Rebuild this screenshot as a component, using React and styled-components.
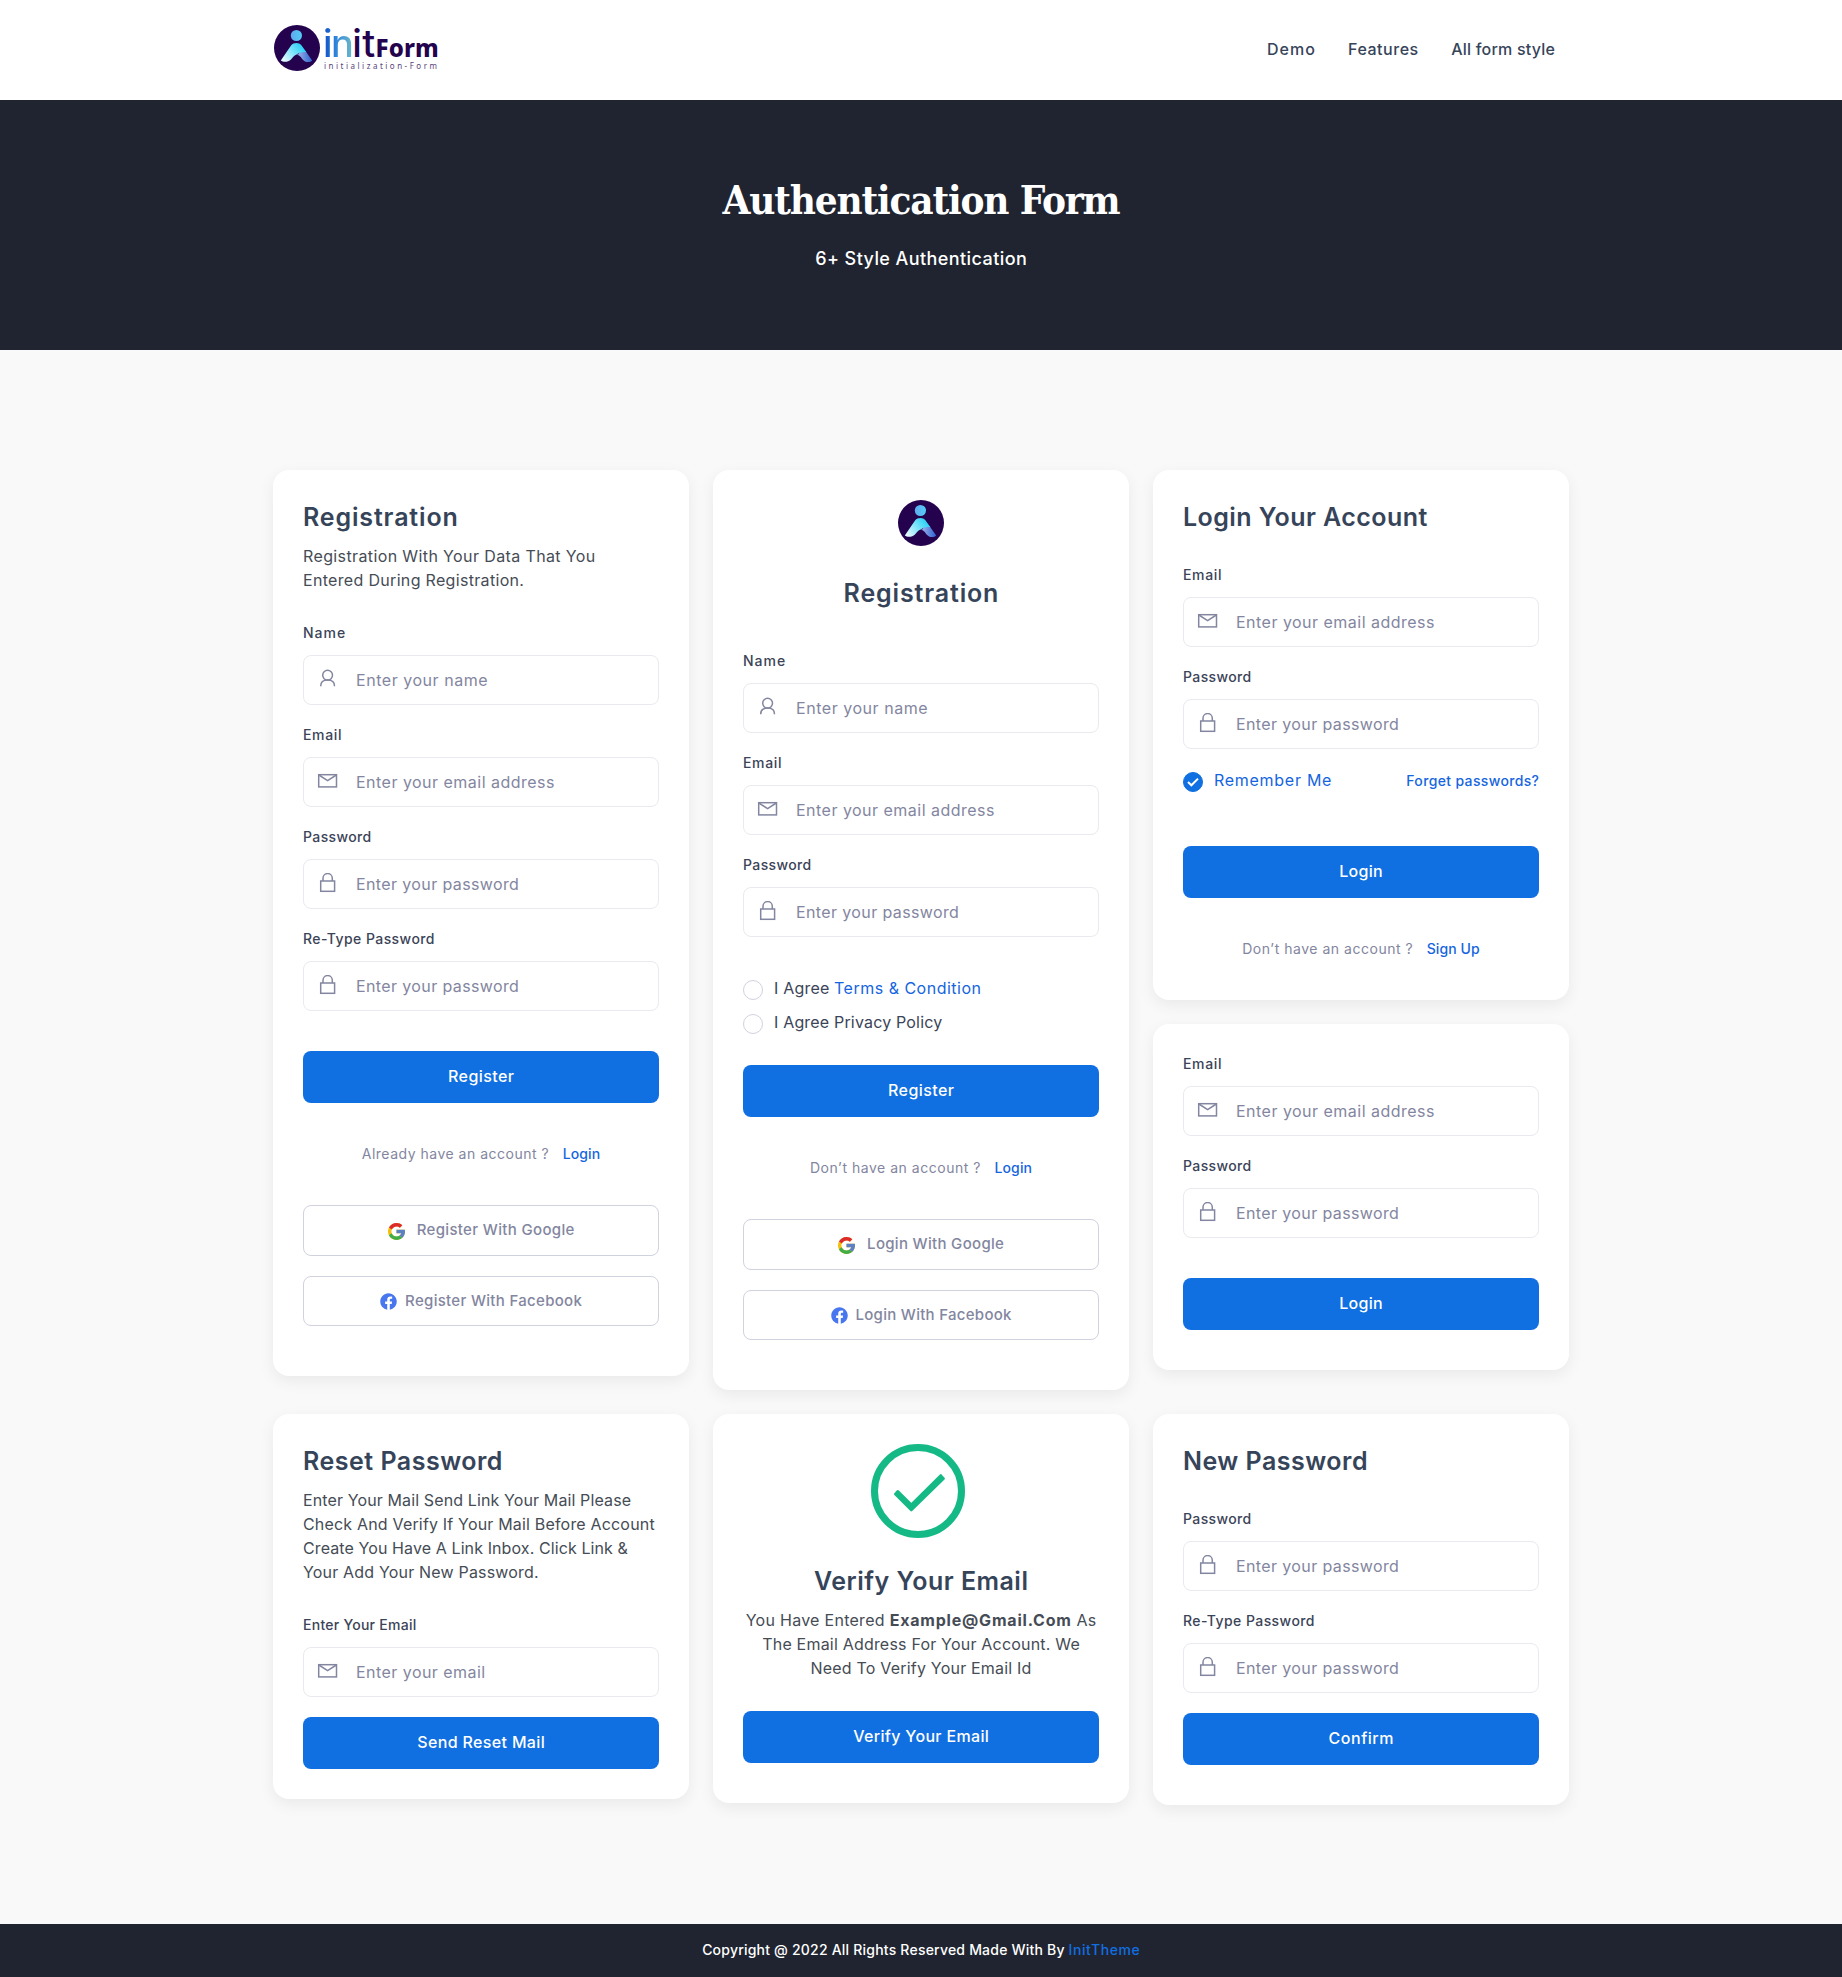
import React from "react";
import styled, { createGlobalStyle, css } from "styled-components";
import { FaFacebook } from "react-icons/fa";

const color = {
  navy: "#202430",
  blue: "#106fe1",
  link: "#1565e0",
  heading: "#36445a",
  body: "#454c55",
  label: "#3b4458",
  muted: "#8386a0",
  line: "#e9eaef",
  outline: "#d0d2de",
  green: "#15b985",
  plum: "#24024e",
};

const GlobalStyle = createGlobalStyle`
  *, *::before, *::after { box-sizing: border-box; }
  body {
    margin: 0;
    background: #f9f9f9;
    font-family: Inter, "Open Sans", sans-serif;
    font-size: 16px;
    line-height: 24px;
    color: ${color.body};
  }
  h1, h2, p { margin: 0; }
  a { text-decoration: none; color: ${color.link}; }
`;

const tracking = css`
  letter-spacing: ${(p) => p.$ls || 0}px;
  margin-right: ${(p) => -(p.$ls || 0)}px;
`;

const Track = styled.span`
  ${tracking}
`;

/* ---------- header ---------- */

const Container = styled.div`
  width: 1296px;
  margin: 0 auto;
`;

const Header = styled.header`
  height: 100px;
  background: #fff;
`;

const HeaderInner = styled(Container)`
  height: 100%;
  display: flex;
  align-items: center;
  justify-content: space-between;
  padding: 0 14px 4px 1px;
`;

const Brand = styled.a`
  display: flex;
  align-items: center;
  gap: 3px;
  color: ${color.plum};
`;

const Wordmark = styled.span`
  display: flex;
  flex-direction: column;
`;

const WordRow = styled.span`
  display: flex;
  align-items: baseline;
  height: 34px;
  line-height: 34px;
  font-size: 38px;
  font-weight: 500;
`;

const WordIn = styled.span`
  letter-spacing: -1.6px;
  color: transparent;
  background: linear-gradient(90deg, #1559c9 10%, #2f86dc 45%, #6cb8c9 100%);
  background-clip: text;
  -webkit-background-clip: text;
`;

const WordIt = styled.span`
  letter-spacing: 0.4px;
`;

const WordForm = styled.span`
  font-family: "Noto Sans", sans-serif;
  font-size: 24px;
  font-weight: 800;
  letter-spacing: 0.1px;
`;

const Tagline = styled.span`
  padding-left: 1px;
  height: 10px;
  line-height: 12px;
  font-family: "Noto Sans", sans-serif;
  font-size: 8px;
  letter-spacing: 2.5px;
  color: #57437a;
`;

const Nav = styled.nav`
  display: flex;
  gap: 33px;
  margin-top: 2px;
`;

const NavLink = styled.a`
  ${tracking}
  font-weight: 450;
  color: ${color.heading};
`;

/* ---------- hero ---------- */

const Hero = styled.section`
  height: 250px;
  padding-top: 75px;
  display: flex;
  flex-direction: column;
  align-items: center;
  gap: 20px;
  background: ${color.navy};
  color: #fff;
`;

const HeroTitle = styled.h1`
  font-family: "DejaVu Serif Condensed", "DejaVu Serif", serif;
  font-stretch: condensed;
  font-size: 40px;
  line-height: 50px;
  font-weight: 700;
  letter-spacing: -1.15px;
`;

const HeroText = styled.p`
  ${tracking}
  font-size: 18px;
  line-height: 27px;
  font-weight: 500;
`;

/* ---------- cards ---------- */

const Main = styled(Container).attrs({ as: "main" })`
  padding: 120px 0 119px;
  display: flex;
  flex-direction: column;
  gap: 24px;
`;

const CardRow = styled.div`
  display: grid;
  grid-template-columns: repeat(3, 416px);
  gap: 24px;
  align-items: start;
`;

const Stack = styled.div`
  display: flex;
  flex-direction: column;
  gap: 24px;
`;

const Card = styled.section`
  display: flex;
  flex-direction: column;
  padding: ${(p) => p.$top || 30}px 30px ${(p) => p.$bottom}px;
  background: #fff;
  border-radius: 16px;
  box-shadow: 0 5px 16px rgba(0, 0, 0, 0.065);
`;

const CardMark = styled.div`
  display: flex;
  justify-content: center;
  margin-bottom: ${(p) => p.$gap}px;
  padding-right: ${(p) => p.$shift || 0}px;
`;

const Heading = styled.h2`
  font-size: 25px;
  line-height: 34px;
  font-weight: 600;
  color: ${color.heading};
  text-align: ${(p) => (p.$center ? "center" : "left")};
  margin-bottom: ${(p) => p.$gap}px;
`;

const Copy = styled.p`
  display: flex;
  flex-direction: column;
  align-items: ${(p) => (p.$center ? "center" : "flex-start")};
  margin-bottom: ${(p) => p.$gap}px;
`;

const Line = styled.span`
  display: block;
  white-space: nowrap;
`;

const Strong = styled.strong`
  letter-spacing: 0.8px;
  font-weight: 700;
`;

const Fields = styled.div`
  display: flex;
  flex-direction: column;
  gap: 19px;
`;

const FieldWrap = styled.label`
  display: flex;
  flex-direction: column;
  gap: 12px;
`;

const FieldLabel = styled.span`
  font-size: 14px;
  line-height: 21px;
  font-weight: 500;
  color: ${color.label};
`;

const FieldBox = styled.span`
  display: flex;
  align-items: center;
  gap: 17px;
  height: 50px;
  padding: 0 16px 0 13px;
  border: 1px solid ${color.line};
  border-radius: 8px;
  background: #fff;
  color: ${color.muted};

  svg {
    flex: none;
    margin-bottom: 2px;
  }
`;

const Input = styled.input`
  flex: 1;
  min-width: 0;
  padding: 0;
  border: 0;
  outline: 0;
  background: none;
  font: inherit;
  letter-spacing: ${(p) => p.$ls}px;
  color: ${color.label};

  &::placeholder {
    color: ${color.muted};
    opacity: 1;
  }
`;

const Button = styled.button`
  height: 52px;
  margin-top: ${(p) => p.$gap}px;
  padding: 0 0 2px;
  border: 0;
  border-radius: 8px;
  background: ${color.blue};
  color: #fff;
  font: 500 16px/24px Inter, sans-serif;
`;

const Switch = styled.p`
  display: flex;
  justify-content: center;
  gap: 14px;
  margin-top: 39px;
  font-size: 14px;
  color: ${color.muted};
`;

const SmallLink = styled.a`
  ${tracking}
  padding-top: ${(p) => p.$drop || 0}px;
  font-size: 14px;
  font-weight: 500;
`;

const Socials = styled.div`
  display: flex;
  flex-direction: column;
  gap: 20px;
  margin-top: 39px;
`;

const Social = styled.button`
  display: flex;
  align-items: center;
  justify-content: center;
  gap: ${(p) => p.$gap}px;
  height: ${(p) => p.$h}px;
  padding: 0 0 1px;
  border: 1px solid ${color.outline};
  border-radius: 8px;
  background: #fff;
  color: ${color.muted};
  font: 500 15px/22px Inter, sans-serif;

  svg {
    margin-top: 2px;
  }
`;

const Checks = styled.div`
  display: flex;
  flex-direction: column;
  gap: 10px;
  margin-top: 39px;
`;

const CheckRow = styled.div`
  display: flex;
  align-items: center;
  justify-content: space-between;
  height: 24px;
  margin-top: ${(p) => p.$top || 0}px;
`;

const Check = styled.label`
  display: flex;
  align-items: center;
  gap: 11px;
  height: 24px;
  white-space: nowrap;
  color: ${(p) => (p.$on ? color.link : color.label)};
`;

const Dot = styled.span`
  display: flex;
  align-items: center;
  justify-content: center;
  width: 20px;
  height: 20px;
  margin-top: 4px;
  border-radius: 50%;
  border: 1px solid ${(p) => (p.$on ? color.blue : color.outline)};
  background: ${(p) => (p.$on ? color.blue : "#fff")};
`;

/* ---------- footer ---------- */

const Footer = styled.footer`
  display: flex;
  align-items: center;
  justify-content: center;
  gap: 4px;
  height: 53px;
  padding-bottom: 2px;
  background: ${color.navy};
  color: #fff;
  font-size: 14px;
  font-weight: 500;
`;

const FooterLink = styled.a`
  ${tracking}
  color: ${color.blue};
`;

/* ---------- drawings ---------- */

const LogoMark = ({ id }) => (
  <svg width="46" height="46" viewBox="0 0 46 46">
    <defs>
      <linearGradient id={`${id}-head`} x1="0" x2="1">
        <stop offset="0" stopColor="#62a8f0" />
        <stop offset="1" stopColor="#52cdf6" />
      </linearGradient>
      <linearGradient id={`${id}-body`} x1="0" y1="0.8" x2="1" y2="0.2">
        <stop offset="0.05" stopColor="#e2f8ff" />
        <stop offset="0.5" stopColor="#7ae4fb" />
        <stop offset="0.85" stopColor="#35d3f7" />
      </linearGradient>
      <linearGradient id={`${id}-leg`} x1="0" x2="1">
        <stop offset="0" stopColor="#a9b9ee" />
        <stop offset="1" stopColor="#2c62cf" />
      </linearGradient>
    </defs>
    <circle cx="23" cy="23" r="23" fill={color.plum} />
    <circle cx="22.4" cy="10.5" r="5.6" fill={`url(#${id}-head)`} />
    <path
      d="M24.2 29.6C25.6 26.4 29.6 25.6 31.8 26.4L38.2 35.4C35.6 37.8 31 37.4 28.6 34.4C27 32.2 25.8 30 22.3 29.7Z"
      fill={`url(#${id}-leg)`}
    />
    <path
      d="M6.8 35.4L17.2 20.3C19.7 17.3 25 17.2 27.4 20.2L32.4 27.2C29 26.4 25.4 27.2 22.6 29.4C19.6 30.4 18.8 32.6 17 34.4C14.2 37.2 9.4 37.6 6.8 35.4Z"
      fill={`url(#${id}-body)`}
    />
  </svg>
);

const IconBase = ({ children }) => (
  <svg width="22" height="20" viewBox="0 0 22 20" fill="none" stroke="currentColor" strokeWidth="1.5">
    {children}
  </svg>
);

const icons = {
  user: (
    <IconBase>
      <circle cx="10.6" cy="6.2" r="4.9" />
      <path d="M3.7 17.2C3.7 13.2 6.6 11.1 10.6 11.1S17.5 13.2 17.5 17.2" />
    </IconBase>
  ),
  mail: (
    <IconBase>
      <rect x="1.7" y="3.7" width="17.8" height="12.2" />
      <path d="M1.9 4L10.6 9.6L19.3 4" />
    </IconBase>
  ),
  lock: (
    <IconBase>
      <rect x="3.7" y="8" width="13.9" height="10.3" />
      <path d="M6 8V5.2A4.65 4.65 0 0 1 15.3 5.2V8" />
    </IconBase>
  ),
};

const GoogleIcon = () => (
  <svg width="17" height="17" viewBox="4 4 40 40">
    <path fill="#f5bd0f" d="M43.611 20.083H42V20H24v8h11.303C33.654 32.657 29.223 36 24 36c-6.627 0-12-5.373-12-12s5.373-12 12-12c3.059 0 5.842 1.154 7.961 3.039l5.657-5.657C34.046 6.053 29.268 4 24 4 12.955 4 4 12.955 4 24s8.955 20 20 20 20-8.955 20-20c0-1.341-.138-2.65-.389-3.917z" />
    <path fill="#dc2b2b" d="M6.306 14.691l6.571 4.819C14.655 15.108 18.961 12 24 12c3.059 0 5.842 1.154 7.961 3.039l5.657-5.657C34.046 6.053 29.268 4 24 4 16.318 4 9.656 8.337 6.306 14.691z" />
    <path fill="#3fae49" d="M24 44c5.166 0 9.86-1.977 13.409-5.192l-6.19-5.238C29.211 35.091 26.715 36 24 36c-5.202 0-9.619-3.317-11.283-7.946l-6.522 5.025C9.505 39.556 16.227 44 24 44z" />
    <path fill="#5b80c4" d="M43.611 20.083H42V20H24v8h11.303c-.792 2.237-2.231 4.166-4.087 5.571l6.193 5.237C36.971 39.205 44 34 44 24c0-1.341-.138-2.65-.389-3.917z" />
  </svg>
);

const VerifiedIcon = () => (
  <svg width="94" height="94" viewBox="0 0 94 94">
    <circle cx="47" cy="47" r="43.5" fill="none" stroke={color.green} strokeWidth="7" />
    <path
      d="M26.7 47.3L40.3 60.6L69.8 31.5L72.6 34.6L40.3 66L24.3 50Z"
      fill={color.green}
      stroke={color.green}
      strokeWidth="2.6"
      strokeLinejoin="round"
    />
  </svg>
);

const TickIcon = () => (
  <svg width="12" height="10" viewBox="0 0 12 10" fill="none" stroke="#fff" strokeWidth="2">
    <path d="M1 5L4.4 8.3L11 1.6" />
  </svg>
);

/* ---------- form parts ---------- */

const fieldKinds = {
  name: { icon: "user", placeholder: "Enter your name", ls: 0.54 },
  email: { icon: "mail", placeholder: "Enter your email address", ls: 0.48 },
  password: { icon: "lock", placeholder: "Enter your password", ls: 0.38 },
  shortEmail: { icon: "mail", placeholder: "Enter your email", ls: 0.46 },
};

const labelSpacing = {
  Name: 1,
  Email: 0.65,
  Password: 0.38,
  "Re-Type Password": 0.43,
  "Enter Your Email": 0.26,
};

const Field = ({ label, kind }) => {
  const { icon, placeholder, ls } = fieldKinds[kind];
  return (
    <FieldWrap>
      <FieldLabel>
        <Track $ls={labelSpacing[label]}>{label}</Track>
      </FieldLabel>
      <FieldBox>
        {icons[icon]}
        <Input placeholder={placeholder} $ls={ls} />
      </FieldBox>
    </FieldWrap>
  );
};

const Title = ({ children, ls, gap, center }) => (
  <Heading $gap={gap} $center={center}>
    <Track $ls={ls}>{children}</Track>
  </Heading>
);

const Submit = ({ children, ls, gap }) => (
  <Button $gap={gap}>
    <Track $ls={ls}>{children}</Track>
  </Button>
);

const SocialButtons = ({ verb, googleLs, facebookLs }) => (
  <Socials>
    <Social $h={51} $gap={12}>
      <GoogleIcon />
      <Track $ls={googleLs}>{verb} With Google</Track>
    </Social>
    <Social $h={50} $gap={8}>
      <FaFacebook size={17} color="#4776ee" />
      <Track $ls={facebookLs}>{verb} With Facebook</Track>
    </Social>
  </Socials>
);

export default function App() {
  return (
    <>
      <GlobalStyle />
      <Header>
        <HeaderInner>
          <Brand>
            <LogoMark id="header" />
            <Wordmark>
              <WordRow>
                <WordIn>in</WordIn>
                <WordIt>it</WordIt>
                <WordForm>Form</WordForm>
              </WordRow>
              <Tagline>initialization-Form</Tagline>
            </Wordmark>
          </Brand>
          <Nav>
            <NavLink $ls={1.1}>Demo</NavLink>
            <NavLink $ls={0.53}>Features</NavLink>
            <NavLink $ls={0.22}>All form style</NavLink>
          </Nav>
        </HeaderInner>
      </Header>

      <Hero>
        <HeroTitle>Authentication Form</HeroTitle>
        <HeroText $ls={0.42}>6+ Style Authentication</HeroText>
      </Hero>

      <Main>
        <CardRow>
          <Card $bottom={50}>
            <Title ls={0.85} gap={10}>Registration</Title>
            <Copy $gap={30}>
              <Line><Track $ls={0.38}>Registration With Your Data That You</Track></Line>
              <Line><Track $ls={0.32}>Entered During Registration.</Track></Line>
            </Copy>
            <Fields>
              <Field label="Name" kind="name" />
              <Field label="Email" kind="email" />
              <Field label="Password" kind="password" />
              <Field label="Re-Type Password" kind="password" />
            </Fields>
            <Submit ls={0.44} gap={40}>Register</Submit>
            <Switch>
              <Track $ls={0.5}>Already have an account ?</Track>
              <SmallLink $ls={0.15}>Login</SmallLink>
            </Switch>
            <SocialButtons verb="Register" googleLs={0.34} facebookLs={0.31} />
          </Card>

          <Card $bottom={50}>
            <CardMark $gap={30}>
              <LogoMark id="card" />
            </CardMark>
            <Title ls={0.85} gap={40} center>Registration</Title>
            <Fields>
              <Field label="Name" kind="name" />
              <Field label="Email" kind="email" />
              <Field label="Password" kind="password" />
            </Fields>
            <Checks>
              <Check>
                <Dot />
                <span>
                  <Track $ls={0.2}>I Agree </Track>
                  <a><Track $ls={0.5}>Terms &amp; Condition</Track></a>
                </span>
              </Check>
              <Check>
                <Dot />
                <Track $ls={0.18}>I Agree Privacy Policy</Track>
              </Check>
            </Checks>
            <Submit ls={0.44} gap={31}>Register</Submit>
            <Switch>
              <Track $ls={0.52}>Don’t have an account ?</Track>
              <SmallLink $ls={0.15}>Login</SmallLink>
            </Switch>
            <SocialButtons verb="Login" googleLs={0.31} facebookLs={0.28} />
          </Card>

          <Stack>
            <Card $bottom={39}>
              <Title ls={0.44} gap={30}>Login Your Account</Title>
              <Fields>
                <Field label="Email" kind="email" />
                <Field label="Password" kind="password" />
              </Fields>
              <CheckRow $top={19}>
                <Check $on>
                  <Dot $on><TickIcon /></Dot>
                  <Track $ls={0.72}>Remember Me</Track>
                </Check>
                <SmallLink $ls={0.35} $drop={2}>Forget passwords?</SmallLink>
              </CheckRow>
              <Submit ls={0.28} gap={54}>Login</Submit>
              <Switch>
                <Track $ls={0.52}>Don’t have an account ?</Track>
                <SmallLink $ls={0.1}>Sign Up</SmallLink>
              </Switch>
            </Card>
            <Card $top={29} $bottom={40}>
              <Fields>
                <Field label="Email" kind="email" />
                <Field label="Password" kind="password" />
              </Fields>
              <Submit ls={0.28} gap={40}>Login</Submit>
            </Card>
          </Stack>
        </CardRow>

        <CardRow>
          <Card $bottom={30}>
            <Title ls={0.5} gap={10}>Reset Password</Title>
            <Copy $gap={30}>
              <Line><Track $ls={0.12}>Enter Your Mail Send Link Your Mail Please</Track></Line>
              <Line><Track $ls={0.18}>Check And Verify If Your Mail Before Account</Track></Line>
              <Line><Track $ls={0.1}>Create You Have A Link Inbox. Click Link &amp;</Track></Line>
              <Line><Track $ls={0.18}>Your Add Your New Password.</Track></Line>
            </Copy>
            <Fields>
              <Field label="Enter Your Email" kind="shortEmail" />
            </Fields>
            <Submit ls={0.35} gap={20}>Send Reset Mail</Submit>
          </Card>

          <Card $bottom={40}>
            <CardMark $gap={26} $shift={6}>
              <VerifiedIcon />
            </CardMark>
            <Title ls={0.48} gap={10} center>Verify Your Email</Title>
            <Copy $center $gap={31}>
              <Line>
                <Track $ls={0.28}>
                  You Have Entered <Strong>Example@Gmail.Com</Strong> As
                </Track>
              </Line>
              <Line><Track $ls={0.2}>The Email Address For Your Account. We</Track></Line>
              <Line><Track $ls={0.2}>Need To Verify Your Email Id</Track></Line>
            </Copy>
            <Submit ls={0.33} gap={0}>Verify Your Email</Submit>
          </Card>

          <Card $bottom={40}>
            <Title ls={0.48} gap={30}>New Password</Title>
            <Fields>
              <Field label="Password" kind="password" />
              <Field label="Re-Type Password" kind="password" />
            </Fields>
            <Submit ls={0.54} gap={20}>Confirm</Submit>
          </Card>
        </CardRow>
      </Main>

      <Footer>
        <Track $ls={0.21}>Copyright @ 2022 All Rights Reserved Made With By</Track>
        <FooterLink $ls={0.6}>InitTheme</FooterLink>
      </Footer>
    </>
  );
}
